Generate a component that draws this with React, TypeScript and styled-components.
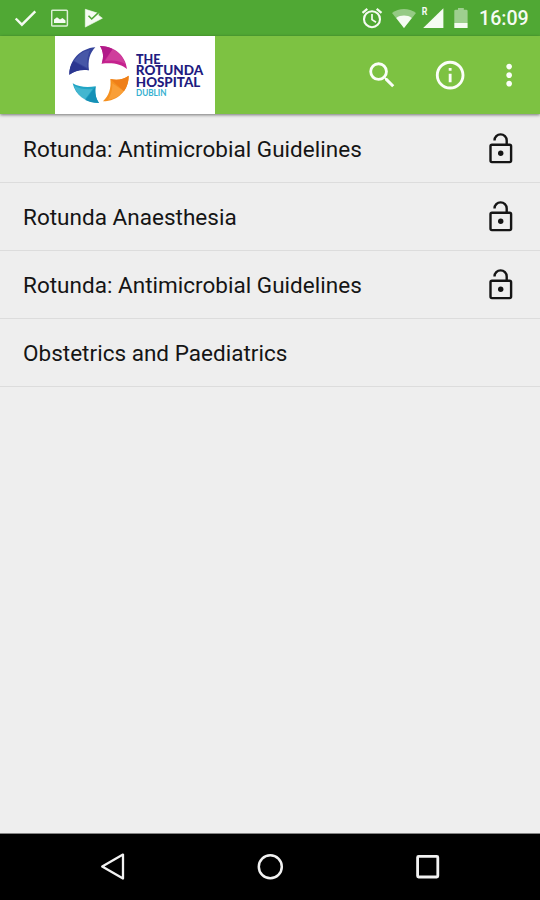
import React from "react";
import styled, { createGlobalStyle } from "styled-components";

const GlobalStyle = createGlobalStyle`
  * { box-sizing: border-box; }
  body { margin: 0; background: #eeeeee; font-family: Roboto, sans-serif; }
  svg { display: block; flex: none; }
`;

const Screen = styled.div`
  display: flex;
  flex-direction: column;
  width: 540px;
  height: 900px;
  overflow: hidden;
  background: #eeeeee;
`;

const StatusBar = styled.header`
  display: flex;
  align-items: center;
  justify-content: space-between;
  flex: none;
  height: 36px;
  padding: 0 11px 0 14px;
  background: #50a834;
  color: #f5fbf2;
`;

const StatusGroup = styled.div<{ $gap: number }>`
  display: flex;
  align-items: center;
  gap: ${(p) => p.$gap}px;
  height: 36px;
`;

const Clock = styled.time`
  width: 50px;
  margin-left: 2px;
  padding-top: 2px;
  font-size: 19.6px;
  font-weight: 500;
  line-height: 24px;
  white-space: nowrap;
`;

const Toolbar = styled.div`
  display: flex;
  align-items: center;
  flex: none;
  height: 78px;
  padding-left: 55px;
  background: #7dc242;
  color: #fbfef8;
  box-shadow: 0 1px 3px rgba(0, 0, 0, 0.5);
  z-index: 1;
`;

const LogoCard = styled.div`
  width: 159.5px;
  height: 78px;
  background: #ffffff;
`;

const Actions = styled.nav`
  display: flex;
  align-items: center;
  margin-left: auto;
`;

const Action = styled.button<{ $width: number; $inset?: number }>`
  display: flex;
  align-items: center;
  justify-content: center;
  width: ${(p) => p.$width}px;
  height: 78px;
  padding: 0 ${(p) => p.$inset ?? 0}px 0 0;
  border: 0;
  background: none;
  color: inherit;
`;

const List = styled.ul`
  flex: 1;
  margin: 0;
  padding: 1px 0 0;
  list-style: none;
`;

const Row = styled.li`
  display: flex;
  align-items: center;
  justify-content: space-between;
  height: 68px;
  padding: 0 22px 0 23px;
  border-bottom: 1.5px solid #dcdcdc;
  color: #151515;
`;

const Title = styled.span`
  font-size: 22.5px;
  line-height: 28px;
  letter-spacing: 0.02px;
  white-space: nowrap;
`;

const NavBar = styled.footer`
  display: flex;
  align-items: center;
  justify-content: center;
  gap: 122px;
  flex: none;
  height: 67px;
  border-top: 1px solid #858585;
  background: #000000;
  color: #f2f2f2;
`;

const CheckIcon = () => (
  <svg width="23" height="36" viewBox="14 0 23 36">
    <path d="M15.700 18.500l6.200 6.200L35.300 11.300" fill="none" stroke="currentColor" strokeWidth="2.400" />
  </svg>
);

const PictureIcon = () => (
  <svg width="18" height="36" viewBox="51 0 18 36">
    <rect x="51.700" y="10.300" width="15.700" height="15.700" rx="1" fill="none" stroke="currentColor" strokeWidth="1.500" opacity=".85" />
    <path d="M54 23v-3.500l3-2.200 3 2.200 2.500-1.600 3 2.600v2.500z" fill="currentColor" />
  </svg>
);

const PlayCheckIcon = () => (
  <svg width="20" height="36" viewBox="83 0 20 36">
    <path d="M85.300 9.300l13.800 4.300-1 1.300 4.300 3.300-17.100 8.900z" fill="currentColor" stroke="currentColor" strokeWidth=".6" strokeLinejoin="round" />
    <path d="M88.500 15.800l3.200 3.200 7-6.600" fill="none" stroke="#50a834" strokeWidth="1.600" />
  </svg>
);

const AlarmIcon = () => (
  <svg width="22" height="36" viewBox="361 0 22 36">
    <g fill="none" stroke="currentColor">
      <circle cx="372" cy="19.200" r="8" strokeWidth="2.100" />
      <path d="M372 14v5.600l4 2.600" strokeWidth="1.700" />
      <path d="M362.500 12.800l4.800-4M381.500 12.800l-4.800-4" strokeWidth="2.200" />
    </g>
  </svg>
);

const WifiIcon = () => (
  <svg width="24" height="36" viewBox="392 0 24 36">
    <path d="M392 13c7-5.200 17-5.200 24 0L404 28z" fill="currentColor" opacity=".42" />
    <path d="M396.200 17.900c4.500-3.200 11.100-3.200 15.600 0L404 28z" fill="currentColor" />
  </svg>
);

const RoamingLabel = styled.span`
  margin: -12px -5px 0 -1px;
  font-size: 11px;
  font-weight: 700;
  line-height: 12px;
  transform: scaleX(0.8);
`;

const SignalGroup = styled.div`
  display: flex;
  align-items: center;
  width: 22px;
  margin-left: -3px;
  margin-right: 1px;
`;

const SignalIcon = () => (
  <svg width="21" height="36" viewBox="424 0 21 36">
    <path d="M424.200 28h20.200V8.200z" fill="currentColor" />
  </svg>
);

const BatteryIcon = () => (
  <svg width="14" height="36" viewBox="455.500 0 14 36">
    <path d="M455.800 11q0-1.300 1.300-1.300h2.400V8h5.800v1.700h2.500q1.300 0 1.300 1.300v12h-13.300z" fill="currentColor" opacity=".48" />
    <path d="M455.800 23h13.300v5h-13.300z" fill="currentColor" />
  </svg>
);

const HospitalLogo = () => (
  <svg width="159" height="78" viewBox="55 36 159 78">
    <g transform="translate(50 32) scale(.33333)">
      <path d="M58 128C58 84 91 49 136 46C119 64 113 86 117 115C92 111 74 117 58 128Z" fill="#35439b" />
      <path d="M70 88L117 115C92 111 74 117 58 128C58 112 62 99 70 88Z" fill="#2b3690" />
      <path d="M72 86L90 66Q104 56 120 54Q110 72 112 108Z" fill="#6575b8" opacity=".4" />
      <path d="M150 42C194 43 226 70 231 111C214 97 190 91 155 95C162 75 160 58 150 42Z" fill="#c5228e" />
      <path d="M150 42C163 42 176 45 188 51L155 95C162 75 160 58 150 42Z" fill="#b21a89" />
      <path d="M188 51Q215 64 227 97Q203 82 165 87Z" fill="#df69b1" opacity=".4" />
      <path d="M236 131C237 174 205 207 159 208C177 190 184 170 181 141C203 146 220 142 236 131Z" fill="#f59120" />
      <path d="M236 131C236 148 231 165 222 178L181 141C203 146 220 142 236 131Z" fill="#ef7f18" />
      <path d="M222 178Q203 200 174 203Q188 181 187 154Z" fill="#ffb45c" opacity=".4" />
      <path d="M68 154C87 165 110 168 137 163C134 181 137 199 147 213C108 213 76 190 68 154Z" fill="#21a5c5" />
      <path d="M137 163C134 181 137 199 147 213C131 213 118 209 106 204Z" fill="#1590b6" />
      <path d="M72 161Q96 174 128 171L104 203Q82 191 72 161Z" fill="#78d0e1" opacity=".4" />
    </g>
    <g fontFamily="Lato, sans-serif" fontWeight="900" fontSize="12.400" fill="#211b80">
      <text x="136" y="63.800" textLength="24.500" lengthAdjust="spacingAndGlyphs">THE</text>
      <text x="135.800" y="75.300" textLength="67.500" lengthAdjust="spacingAndGlyphs">ROTUNDA</text>
      <text x="135.800" y="86.700" textLength="64.500" lengthAdjust="spacingAndGlyphs">HOSPITAL</text>
    </g>
    <text x="136" y="95.600" textLength="30.500" lengthAdjust="spacingAndGlyphs" fontFamily="Lato, sans-serif" fontWeight="700" fontSize="8.800" fill="#35b0d0">DUBLIN</text>
  </svg>
);

const MaterialIcon = ({ d }: { d: string }) => (
  <svg width="34.300" height="34.300" viewBox="0 0 24 24" fill="currentColor">
    <path d={d} />
  </svg>
);

const paths = {
  search:
    "M15.500 14h-.790l-.280-.270A6.471 6.471 0 0 0 16 9.500 6.500 6.500 0 1 0 9.500 16c1.610 0 3.090-.590 4.230-1.570l.270.280v.790l5 4.990L20.490 19l-4.990-5zm-6 0C7.010 14 5 11.990 5 9.500S7.010 5 9.500 5 14 7.010 14 9.500 11.990 14 9.500 14z",
  info: "M11 17h2v-6h-2v6zm1-15C6.480 2 2 6.480 2 12s4.480 10 10 10 10-4.480 10-10S17.520 2 12 2zm0 18c-4.410 0-8-3.590-8-8s3.590-8 8-8 8 3.590 8 8-3.590 8-8 8zM11 9h2V7h-2v2z",
  more: "M12 8c1.100 0 2-.900 2-2s-.900-2-2-2-2 .900-2 2 .900 2 2 2zm0 2c-1.100 0-2 .900-2 2s.900 2 2 2 2-.900 2-2-.900-2-2-2zm0 6c-1.100 0-2 .900-2 2s.900 2 2 2 2-.900 2-2-.900-2-2-2z",
};

const UnlockIcon = () => (
  <svg width="34" height="34" viewBox="0 0 34 34" fill="none" stroke="currentColor" strokeWidth="2.400">
    <rect x="6.500" y="12.700" width="20.600" height="17.400" rx="1.500" />
    <path d="M10.500 8.500a6.100 6.100 0 0 1 12.200 0v4.200" />
    <circle cx="16.700" cy="21.200" r="2.700" fill="currentColor" stroke="none" />
  </svg>
);

const BackIcon = () => (
  <svg width="36" height="36" viewBox="94 849 36 36">
    <path d="M102.200 866.600l20.800-12v24z" fill="none" stroke="currentColor" strokeWidth="2.300" strokeLinejoin="round" />
  </svg>
);

const HomeIcon = () => (
  <svg width="36" height="36" viewBox="252 849 36 36">
    <circle cx="270.300" cy="866.800" r="11.500" fill="none" stroke="currentColor" strokeWidth="2.500" />
  </svg>
);

const RecentsIcon = () => (
  <svg width="36" height="36" viewBox="410 849 36 36">
    <rect x="417.600" y="856.400" width="20.200" height="20.600" rx="1" fill="none" stroke="currentColor" strokeWidth="2.800" />
  </svg>
);

const guides = [
  { title: "Rotunda: Antimicrobial Guidelines", unlocked: true },
  { title: "Rotunda Anaesthesia", unlocked: true },
  { title: "Rotunda: Antimicrobial Guidelines", unlocked: true },
  { title: "Obstetrics and Paediatrics", unlocked: false },
];

export default function App() {
  return (
    <>
      <GlobalStyle />
      <Screen>
        <StatusBar>
          <StatusGroup $gap={14}>
            <CheckIcon />
            <PictureIcon />
            <PlayCheckIcon />
          </StatusGroup>
          <StatusGroup $gap={9}>
            <AlarmIcon />
            <WifiIcon />
            <SignalGroup>
              <RoamingLabel>R</RoamingLabel>
              <SignalIcon />
            </SignalGroup>
            <BatteryIcon />
            <Clock>16:09</Clock>
          </StatusGroup>
        </StatusBar>
        <Toolbar>
          <LogoCard>
            <HospitalLogo />
          </LogoCard>
          <Actions>
            <Action $width={68} aria-label="Search">
              <MaterialIcon d={paths.search} />
            </Action>
            <Action $width={68} aria-label="Information">
              <MaterialIcon d={paths.info} />
            </Action>
            <Action $width={56} $inset={6} aria-label="More options">
              <MaterialIcon d={paths.more} />
            </Action>
          </Actions>
        </Toolbar>
        <List>
          {guides.map((guide, index) => (
            <Row key={index}>
              <Title>{guide.title}</Title>
              {guide.unlocked && <UnlockIcon />}
            </Row>
          ))}
        </List>
        <NavBar>
          <BackIcon />
          <HomeIcon />
          <RecentsIcon />
        </NavBar>
      </Screen>
    </>
  );
}
